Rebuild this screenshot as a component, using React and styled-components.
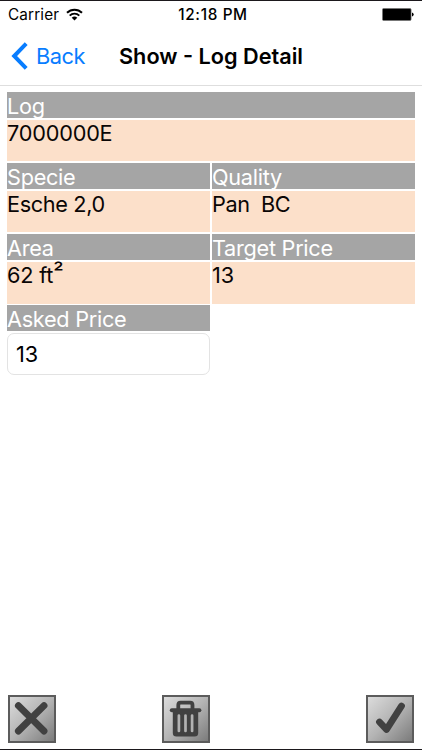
import styled, { createGlobalStyle } from "styled-components";

const GlobalStyle = createGlobalStyle`
  * {
    box-sizing: border-box;
  }
  body {
    margin: 0;
    background-color: #fff;
    font-family: Inter, "Liberation Sans", sans-serif;
  }
`;

const Screen = styled.div`
  width: 422px;
  height: 750px;
  display: flex;
  flex-direction: column;
  overflow: hidden;
  background-color: #fff;
  border-top: 1px solid #1b181c;
  border-bottom: 1px solid #1b181c;
`;

const StatusBar = styled.header`
  height: 27px;
  flex: none;
  display: grid;
  grid-template-columns: 1fr auto 1fr;
  align-items: center;
  padding: 0 8px;
  font-size: 15.3px;
  line-height: 27px;
`;

const Carrier = styled.div`
  display: flex;
  align-items: center;
  gap: 7px;
  letter-spacing: 0.15px;
`;

const Time = styled.span`
  padding-left: 4px;
  font-weight: 500;
  letter-spacing: 0.65px;
`;

const Battery = styled.svg`
  justify-self: end;
`;

const NavBar = styled.nav`
  height: 58px;
  flex: none;
  display: grid;
  grid-template-columns: 108px auto 1fr;
  align-items: center;
  padding: 0 0 1px 11px;
  border-bottom: 1px solid #dedede;
`;

const BackButton = styled.button`
  display: flex;
  align-items: center;
  gap: 8px;
  padding: 0;
  border: 0;
  background: none;
  color: #087dff;
  font-family: inherit;
  font-size: 21.8px;
  letter-spacing: -0.45px;
`;

const Title = styled.h1`
  margin: 0;
  font-size: 21.7px;
  font-weight: 600;
  letter-spacing: 0;
  white-space: nowrap;
`;

const Fields = styled.main`
  flex: 1;
  display: grid;
  grid-template-columns: 203.3px 203.3px;
  grid-auto-rows: 69.4px;
  gap: 1.7px;
  padding: 6px 7px;
`;

const FieldBox = styled.section`
  grid-column: ${(props) => (props.$wide ? "1 / -1" : "auto")};
  display: flex;
  flex-direction: column;
  gap: 1.7px;
  font-size: 21.7px;
`;

const Label = styled.label`
  height: 26.1px;
  flex: none;
  background-color: #a5a5a5;
  color: #fff;
  line-height: 28px;
  letter-spacing: -0.28px;
`;

const Value = styled.div`
  flex: 1;
  background-color: #fce0ca;
  color: #0a0605;
  line-height: 27px;
  letter-spacing: ${(props) => props.$spacing || 0}px;
  white-space: pre;
`;

const Power = styled.span`
  font-size: 23.5px;
  line-height: 0;
  vertical-align: 2px;
`;

const Input = styled.input`
  width: 100%;
  height: 42px;
  padding: 0 8px;
  border: 1px solid #e3e3e3;
  border-radius: 7px;
  outline: none;
  background-color: #fff;
  color: #000;
  font: inherit;
`;

const Toolbar = styled.footer`
  flex: none;
  display: grid;
  grid-template-columns: 154px 1fr auto;
  padding: 0 8px 6px;
`;

const ToolButton = styled.button`
  width: 48px;
  height: 48px;
  padding: 0;
  border: 2px solid #5c5c5c;
  background: linear-gradient(135deg, #dcdcdc 0%, #b4b4b4 50%, #7b7b7b 100%);
  color: #414141;

  svg {
    display: block;
  }
`;

const Field = ({ label, value, wide, spacing }) => (
  <FieldBox $wide={wide}>
    <Label>{label}</Label>
    <Value $spacing={spacing}>{value}</Value>
  </FieldBox>
);

const WifiIcon = () => (
  <svg width="17" height="13" viewBox="0 0 17 13" fill="none" stroke="#000">
    <path d="M1 4.8a10.6 10.6 0 0 1 15 0" strokeWidth="2" />
    <path d="M3.7 7.6a6.8 6.8 0 0 1 9.6 0" strokeWidth="1.9" />
    <path d="M8.5 12.6 5.7 9.8a4 4 0 0 1 5.6 0Z" fill="#000" stroke="none" />
  </svg>
);

const App = () => {
  return (
    <>
      <GlobalStyle />
      <Screen>
        <StatusBar>
          <Carrier>
            Carrier
            <WifiIcon />
          </Carrier>
          <Time>12:18 PM</Time>
          <Battery width="32" height="13" viewBox="0 0 32 13">
            <rect x="0.5" y="0.5" width="28.5" height="12" rx="1.2" stroke="#777" />
            <rect x="1" y="1" width="27.5" height="11" rx="0.8" />
            <path d="M30 4.5q1.7.4 1.7 2t-1.7 2z" />
          </Battery>
        </StatusBar>

        <NavBar>
          <BackButton>
            <svg width="17" height="28" viewBox="0 0 17 28" fill="none">
              <path d="M15.2 1.7 3.2 14l12 12.3" stroke="currentColor" strokeWidth="4" />
            </svg>
            Back
          </BackButton>
          <Title>Show - Log Detail</Title>
        </NavBar>

        <Fields>
          <Field wide label="Log" value="7000000E" spacing={-0.2} />
          <Field label="Specie" value="Esche 2,0" spacing={-0.35} />
          <Field label="Quality" value="Pan  BC" spacing={-0.4} />
          <Field
            label="Area"
            value={
              <>
                62 ft<Power>²</Power>
              </>
            }
            spacing={-0.2}
          />
          <Field label="Target Price" value="13" />
          <FieldBox>
            <Label htmlFor="asked">Asked Price</Label>
            <Input id="asked" defaultValue="13" />
          </FieldBox>
        </Fields>

        <Toolbar>
          <ToolButton aria-label="Cancel">
            <svg width="44" height="44" viewBox="0 0 44 44" fill="none">
              <path
                d="M8.4 8.6 34 34M34 8.6 8.4 34"
                stroke="currentColor"
                strokeWidth="6.9"
                strokeLinecap="round"
              />
            </svg>
          </ToolButton>
          <ToolButton aria-label="Delete">
            <svg
              width="44"
              height="44"
              viewBox="0 0 44 44"
              fill="none"
              stroke="currentColor"
              strokeLinejoin="round"
              strokeLinecap="round"
            >
              <path d="M14.3 12V8q0-2.4 2.3-2.4h9.6q2.3 0 2.3 2.4V12" strokeWidth="3.8" />
              <path d="M7.8 13.2h27.6" strokeWidth="4" />
              <path d="M8.8 14h25.4v22q0 3.6-3.6 3.6H12.4q-3.6 0-3.6-3.6z" fill="currentColor" stroke="none" />
              <path d="M14.9 18.5v15.5M21.5 18.5v15.5M28.1 18.5v15.5" stroke="#b2b2b2" strokeWidth="2.7" />
            </svg>
          </ToolButton>
          <ToolButton aria-label="Confirm">
            <svg width="44" height="44" viewBox="0 0 44 44" fill="none">
              <path
                d="m11.5 25 7 7.5L33.5 9"
                stroke="currentColor"
                strokeWidth="6.8"
                strokeLinecap="round"
                strokeLinejoin="round"
              />
            </svg>
          </ToolButton>
        </Toolbar>
      </Screen>
    </>
  );
};

export default App;
